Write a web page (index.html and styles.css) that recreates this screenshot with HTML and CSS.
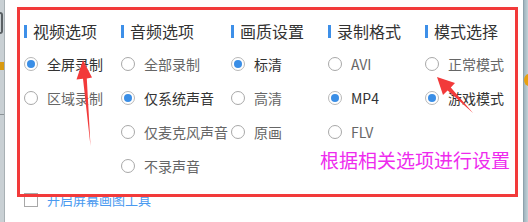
FILE: index.html
```html
<!DOCTYPE html>
<html lang="zh-CN">
<head>
<meta charset="utf-8">
<link rel="stylesheet" href="styles.css">
</head>
<body>
<div class="page">
  <div class="edge-left"><span class="edge-mark"></span><span class="edge-orange"></span><span class="edge-line"></span></div>
  <div class="edge-right"><span class="edge-dot"></span></div>

  <div class="panel">
    <div class="cols">
      <div class="col c1">
        <div class="head"><span class="bar"></span>视频选项</div>
        <div class="opt on"><span class="radio"></span>全屏录制</div>
        <div class="opt"><span class="radio"></span>区域录制</div>
      </div>
      <div class="col c2">
        <div class="head"><span class="bar"></span>音频选项</div>
        <div class="opt"><span class="radio"></span>全部录制</div>
        <div class="opt on"><span class="radio"></span>仅系统声音</div>
        <div class="opt"><span class="radio"></span>仅麦克风声音</div>
        <div class="opt"><span class="radio"></span>不录声音</div>
      </div>
      <div class="col c3">
        <div class="head"><span class="bar"></span>画质设置</div>
        <div class="opt on"><span class="radio"></span>标清</div>
        <div class="opt"><span class="radio"></span>高清</div>
        <div class="opt"><span class="radio"></span>原画</div>
      </div>
      <div class="col c4">
        <div class="head"><span class="bar"></span>录制格式</div>
        <div class="opt"><span class="radio"></span>AVI</div>
        <div class="opt on"><span class="radio"></span>MP4</div>
        <div class="opt"><span class="radio"></span>FLV</div>
      </div>
      <div class="col c5">
        <div class="head"><span class="bar"></span>模式选择</div>
        <div class="opt"><span class="radio"></span>正常模式</div>
        <div class="opt on"><span class="radio"></span>游戏模式</div>
      </div>
    </div>
    <div class="footer"><span class="check"></span><span class="footer-text">开启屏幕画图工具</span></div>
  </div>

  <div class="frame"></div>
  <div class="note">根据相关选项进行设置</div>
  <svg class="arrows" width="528" height="222" viewBox="0 0 528 222">
    <polygon fill="#f23a3a" points="90.5,146 86.8,78.5 92,77.5 83,60 76.5,79.5 83,78.8"/>
    <polygon fill="#f23a3a" points="473,113 450.8,87.4 455,83 437,77 443,95 447.6,90.6"/>
  </svg>
</div>
</body>
</html>
```

FILE: styles.css
```css
* { box-sizing: border-box; }
html, body { margin: 0; padding: 0; background: #fff; }
body {
  font-family: "Noto Sans CJK SC", "Noto Sans", sans-serif;
  width: 528px;
  height: 222px;
  overflow: hidden;
}
.page { position: relative; width: 528px; height: 222px; }

.edge-left {
  position: absolute; left: 0; top: 0; width: 5px; height: 222px;
  background: #c9d0d4; border-right: 1px solid #a8b0b4; overflow: hidden;
}
.edge-mark {
  position: absolute; left: 0; top: 12px; width: 3px; height: 22px;
  border-right: 2px solid #5a6064; border-top: 2px solid #5a6064; border-bottom: 2px solid #5a6064;
  border-radius: 0 3px 3px 0;
}
.edge-orange { position: absolute; left: 0; top: 62px; width: 4px; height: 8px; background: #d99a10; }
.edge-line { position: absolute; left: 0; top: 114px; width: 4px; height: 1px; background: #8a9296; }

.edge-right {
  position: absolute; right: 0; top: 0; width: 5px; height: 222px;
  background: linear-gradient(90deg, #9fb4be, #c4d2d8); border-left: 1px solid #8fa2ac; overflow: hidden;
}
.edge-dot { position: absolute; left: 0; top: 74px; width: 10px; height: 12px; border-radius: 50%; background: #e8a010; }

.panel { padding: 20px 0 0 24px; }
.cols { display: flex; }
.col { display: flex; flex-direction: column; }
.c1 { width: 97px; }
.c2 { width: 110px; }
.c3 { width: 97px; }
.c4 { width: 97px; }
.c5 { width: 90px; }

.head {
  display: flex; align-items: center;
  height: 22px; font-size: 16px; color: #333; white-space: nowrap;
  margin-bottom: 5px;
}
.bar { width: 3px; height: 13px; background: #3d8fe8; margin-right: 6px; }

.opt {
  display: flex; align-items: center; height: 34px;
  font-size: 14px; color: #666; white-space: nowrap;
}
.opt.on { color: #333; }
.radio {
  width: 14px; height: 14px; border: 1px solid #a8a8a8; border-radius: 50%;
  margin-right: 9px; flex: none; position: relative; background: #fff;
}
.opt.on .radio { border-color: #b8b8b8; }
.opt.on .radio::after {
  content: ""; position: absolute; left: 2px; top: 2px; width: 8px; height: 8px;
  border-radius: 50%; background: #3a8ee6;
}

.footer { display: flex; align-items: center; margin-top: 9px; height: 16px; }
.check { width: 14px; height: 14px; border: 1px solid #a8a8a8; margin-right: 9px; flex: none; }
.footer-text { font-size: 13px; color: #4a9af0; line-height: 16px; }

.frame {
  position: absolute; left: 17px; top: 7px; width: 501px; height: 190px;
  border: 3px solid #f23a3a;
}
.note {
  position: absolute; left: 320px; top: 149px;
  font-size: 19px; line-height: 22px; color: #ee2bee; white-space: nowrap;
}
.arrows { position: absolute; left: 0; top: 0; }
```
